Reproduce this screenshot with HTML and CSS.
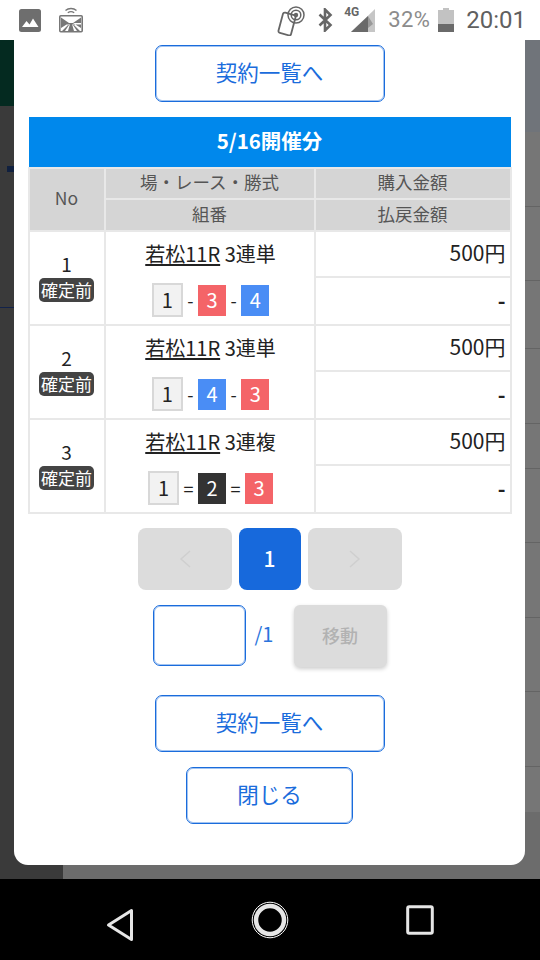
FILE: index.html
```html
<!DOCTYPE html>
<html lang="ja">
<head>
<meta charset="utf-8">
<title>契約一覧</title>
<link rel="stylesheet" href="styles.css">
</head>
<body>
<div class="phone">
  <header class="status">
    <svg class="st-pic" viewBox="0 0 22 23"><rect width="22" height="23" rx="2.5" fill="#6e6e6e"/><path d="M3 18l4.500-6 3 3.500 3.500-6 5.500 8.500z" fill="#fff"/></svg>
    <svg class="st-cast" viewBox="0 0 24 27"><g fill="none" stroke="#777" stroke-width="1.400"><path d="M6.500 4.500c3-2.600 8-2.600 11 0M8.800 6.800c2-1.500 4.400-1.500 6.400 0"/></g><rect x=".8" y="9.800" width="22.400" height="16" rx="1" fill="#fff" stroke="#777" stroke-width="1.600"/><path d="M2 11.500l8 5.500-8 5zM22 11.500l-8 5.500 8 5zM2 17h20v1.500H2z" fill="#777"/><path d="M9 25l2-7h2l2 7zM3 25l6-6h1l-4 6zM21 25l-6-6h-1l4 6z" fill="#777"/></svg>
    <span class="st-spacer"></span>
    <svg class="st-nfc" viewBox="0 0 30 30"><rect x="3.500" y="7.500" width="13" height="21" rx="2" transform="rotate(15 10 18)" fill="#fff" stroke="#666" stroke-width="1.800"/><g fill="none" stroke="#666"><circle cx="19" cy="9" r="8" stroke-width="1.500"/><circle cx="19" cy="9" r="4.800" stroke-width="1.500"/></g><circle cx="19" cy="9" r="2.200" fill="#666"/></svg>
    <svg class="st-bt" viewBox="0 0 15 24"><path d="M1.500 6.500l11 10.500-5.500 5.500V1.500l5.500 5.500-11 10.500" fill="none" stroke="#666" stroke-width="2.600"/></svg>
    <span class="st-signal">
      <b class="st-4g">4G</b>
      <svg viewBox="0 0 24 24"><path d="M24 1v23H0z" fill="#c6c6c6"/><path d="M17 8v16H0z" fill="#6a6a6a"/><path d="M17 8l5 8-5 4z" fill="#999"/></svg>
    </span>
    <span class="st-pct">32%</span>
    <svg class="st-batt" viewBox="0 0 16 24"><path d="M5 0h6v2h5v22H0V2h5z" fill="#c2c2c2"/><path d="M0 16h16v8H0z" fill="#6a6a6a"/></svg>
    <span class="st-time">20:01</span>
  </header>

  <main class="stage">
    <div class="bg-left">
      <div class="bg-green"></div>
      <div class="bg-dark-a"><i class="bg-mark"></i></div>
      <div class="bg-dark-b"></div>
      <div class="bg-dark-c"></div>
    </div>
    <div class="bg-right">
      <div class="bg-top"></div>
      <div class="bg-row"></div>
      <div class="bg-row"></div>
      <div class="bg-row bg-row-m"></div>
      <div class="bg-row"></div>
      <div class="bg-row bg-row-s"></div>
      <div class="bg-row"></div>
      <div class="bg-row"></div>
      <div class="bg-row"></div>
      <div class="bg-row"></div>
      <div class="bg-row bg-row-s bg-row-last"></div>
      <div class="bg-end"></div>
    </div>

    <section class="modal">
      <a class="btn btn-wide btn-first">契約一覧へ</a>
      <h2 class="bar">5/16開催分</h2>
      <table class="tbl">
        <colgroup><col class="c1"><col class="c2"><col class="c3"></colgroup>
        <thead>
          <tr class="hr1"><th rowspan="2">No</th><th>場・レース・勝式</th><th>購入金額</th></tr>
          <tr class="hr2"><th>組番</th><th>払戻金額</th></tr>
        </thead>
        <tbody>
          <tr class="r1">
            <td rowspan="2" class="no"><div>1</div><span class="badge">確定前</span></td>
            <td rowspan="2" class="race">
              <div class="race-name"><u>若松11R</u> 3連単</div>
              <div class="balls"><span class="ball ball-w">1</span><span class="sep">-</span><span class="ball ball-r">3</span><span class="sep">-</span><span class="ball ball-b">4</span></div>
            </td>
            <td class="amt">500円</td>
          </tr>
          <tr class="r2"><td class="amt amt-none">-</td></tr>
          <tr class="r1">
            <td rowspan="2" class="no"><div>2</div><span class="badge">確定前</span></td>
            <td rowspan="2" class="race">
              <div class="race-name"><u>若松11R</u> 3連単</div>
              <div class="balls"><span class="ball ball-w">1</span><span class="sep">-</span><span class="ball ball-b">4</span><span class="sep">-</span><span class="ball ball-r">3</span></div>
            </td>
            <td class="amt">500円</td>
          </tr>
          <tr class="r2"><td class="amt amt-none">-</td></tr>
          <tr class="r1">
            <td rowspan="2" class="no"><div>3</div><span class="badge">確定前</span></td>
            <td rowspan="2" class="race">
              <div class="race-name"><u>若松11R</u> 3連複</div>
              <div class="balls"><span class="ball ball-w">1</span><span class="sep">=</span><span class="ball ball-k">2</span><span class="sep">=</span><span class="ball ball-r">3</span></div>
            </td>
            <td class="amt">500円</td>
          </tr>
          <tr class="r2"><td class="amt amt-none">-</td></tr>
        </tbody>
      </table>

      <nav class="pager">
        <span class="pg pg-arrow"><svg viewBox="0 0 14 20"><path d="M12 2L3 10l9 8" fill="none" stroke="#cfcfcf" stroke-width="1.500"/></svg></span>
        <span class="pg pg-cur">1</span>
        <span class="pg pg-arrow"><svg viewBox="0 0 14 20"><path d="M2 2l9 8-9 8" fill="none" stroke="#cfcfcf" stroke-width="1.500"/></svg></span>
      </nav>

      <div class="jump">
        <input class="jump-input" type="text" aria-label="ページ">
        <span class="jump-total">/1</span>
        <span class="jump-btn">移動</span>
      </div>

      <a class="btn btn-wide btn-list">契約一覧へ</a>
      <a class="btn btn-close">閉じる</a>
    </section>
  </main>

  <footer class="nav">
    <svg class="nav-back" viewBox="0 0 28 34"><path d="M25.500 2.500v29L2.500 17z" fill="none" stroke="#e6e6e6" stroke-width="3" stroke-linejoin="round"/></svg>
    <svg class="nav-home" viewBox="0 0 38 38"><circle cx="19" cy="19" r="17.800" fill="none" stroke="#fff" stroke-width="1"/><circle cx="19" cy="19" r="14" fill="none" stroke="#e6e6e6" stroke-width="4.500"/></svg>
    <svg class="nav-recent" viewBox="0 0 28 30"><rect x="1.700" y="1.700" width="24.600" height="26.600" rx="1.500" fill="none" stroke="#e6e6e6" stroke-width="3"/></svg>
  </footer>
</div>
</body>
</html>
```

FILE: styles.css
```css
* { box-sizing: border-box; }
html, body { margin: 0; padding: 0; }
body { width: 540px; height: 960px; overflow: hidden; background: #000; font-family: "Noto Sans CJK JP", "Noto Sans", sans-serif; }
.phone { display: flex; flex-direction: column; width: 540px; height: 960px; }

/* status bar */
.status { display: flex; align-items: center; height: 40px; flex: none; background: #fff; font-family: Roboto, sans-serif; padding: 0 14px 0 19px; }
.st-pic { width: 22px; height: 23px; }
.st-cast { width: 24px; height: 27px; margin-left: 18px; margin-top: -1px; }
.st-spacer { flex: 1; }
.st-nfc { width: 30px; height: 30px; margin-top: 2px; }
.st-bt { width: 15px; height: 24px; margin-left: 11px; }
.st-signal { display: flex; position: relative; width: 31px; height: 24px; margin-left: 11px; justify-content: flex-end; }
.st-signal svg { width: 24px; height: 24px; }
.st-4g { position: absolute; left: 0; top: -2px; font-size: 12px; line-height: 13px; font-weight: 700; color: #666; }
.st-pct { font-size: 22px; line-height: 30px; color: #8c8c8c; margin-left: 13px; letter-spacing: .4px; }
.st-batt { width: 16px; height: 24px; margin-left: 8px; }
.st-time { font-size: 24px; line-height: 30px; color: #606060; margin-left: 12px; font-weight: 400; }

/* dimmed page behind */
.stage { position: relative; display: flex; flex: 1; background: #6c6c6c; overflow: hidden; }
.bg-left { display: flex; flex-direction: column; width: 63px; flex: none; background: #3a3a3a; }
.bg-green { height: 66px; background: #042a20; }
.bg-dark-a { height: 60px; }
.bg-mark { display: block; width: 7px; height: 6px; margin: 60px 0 0 7px; background: #10203f; }
.bg-dark-b { height: 142px; border-bottom: 1px solid #12224a; }
.bg-dark-c { flex: 1; }
.bg-right { display: flex; flex-direction: column; flex: 1; }
.bg-top { height: 92px; background: #70747a; }
.bg-row { height: 74.500px; background: #767676; border-bottom: 1px solid #646464; }
.bg-row-m { height: 68px; }
.bg-row-s { height: 45px; }
.bg-row-last { border-bottom: 0; }
.bg-end { flex: 1; background: #6c6c6c; }

/* modal */
.modal { position: absolute; left: 14px; top: 0; width: 511px; height: 825px; display: flex; flex-direction: column; align-items: center; background: #fff; border-radius: 0 0 14px 14px; }
.btn { display: flex; align-items: center; justify-content: center; height: 57px; padding-bottom: 4px; color: #1a6cdc; font-size: 21.500px; background: #fff; border: 1px solid #1a6cdc; box-shadow: inset 0 0 0 1px rgba(26,108,220,.4); border-radius: 7px; }
.btn-wide { width: 230px; }
.btn-first { margin-top: 5px; }
.btn-list { margin-top: 28px; }
.btn-close { width: 167px; margin-top: 15px; }
.bar { width: 482px; height: 50px; margin: 15px 0 0; background: #0088ec; color: #fff; font-size: 20.500px; font-weight: 700; line-height: 47px; text-align: center; }

/* table */
.tbl { width: 482px; table-layout: fixed; border-collapse: collapse; color: #222; margin-bottom: 14px; }
.c1 { width: 76px; }
.c2 { width: 210px; }
.c3 { width: 196px; }
.tbl th, .tbl td { border: 2px solid #e8e8e8; padding: 0; }
.tbl th { background: #d5d5d5; color: #555; font-size: 17.500px; font-weight: 400; text-align: center; line-height: 24px; padding-bottom: 3px; }
.hr1 { height: 31px; }
.hr2 { height: 32px; }
.r1 { height: 46px; }
.r2 { height: 48px; }
.no { text-align: center; font-size: 19px; line-height: 24px; vertical-align: top; padding-top: 20px !important; }
.no div { height: 26px; }
.badge { display: block; width: 55px; height: 24px; margin: 0 auto; background: #444; color: #fff; border-radius: 5px; font-size: 17px; line-height: 23px; }
.race { vertical-align: top; text-align: center; padding-left: 2px !important; }
.race-name { font-size: 20px; line-height: 26px; margin-top: 9px; }
.race-name u { text-underline-offset: 2px; }
.balls { display: flex; align-items: center; justify-content: center; margin-top: 16px; height: 34px; }
.ball { display: flex; align-items: center; justify-content: center; width: 28px; height: 31px; padding-bottom: 1px; font-size: 20px; }
.ball-w { width: 31px; height: 34px; background: #f2f2f2; color: #222; border: 2px solid #d8d8d8; }
.ball-r { background: #f46468; color: #fff; }
.ball-b { background: #4a8df5; color: #fff; }
.ball-k { background: #333; color: #fff; }
.sep { margin: 0 4.500px; font-size: 18px; line-height: 24px; color: #222; }
.amt { text-align: right; font-size: 21px; line-height: 28px; padding: 0 4px 4px 0 !important; }
.amt-none { font-weight: 700; padding-bottom: 2px !important; }

/* pager */
.pager { display: flex; gap: 7px; }
.pg { display: flex; align-items: center; justify-content: center; height: 62px; border-radius: 8px; }
.pg-arrow { width: 94px; background: #dcdcdc; }
.pg-arrow svg { width: 14px; height: 20px; }
.pg-cur { width: 62px; padding-bottom: 3px; background: #1769dc; color: #fff; font-size: 21px; font-weight: 500; }
.jump { display: flex; align-items: flex-start; width: 234px; margin-top: 15px; }
.jump-input { width: 93px; height: 61px; padding: 0; border: 1px solid #1a6cdc; box-shadow: inset 0 0 0 1px rgba(26,108,220,.4); border-radius: 7px; background: #fff; outline: 0; }
.jump-total { width: 48px; height: 62px; padding-left: 9px; color: #2a74dc; font-size: 20px; line-height: 57px; }
.jump-btn { display: flex; align-items: center; justify-content: center; width: 93px; height: 62px; padding-bottom: 3px; background: #dcdcdc; color: #b2b2b2; font-size: 18px; font-weight: 500; border-radius: 6px; box-shadow: 0 2px 4px rgba(0,0,0,.2); }

/* android nav */
.nav { position: relative; height: 81px; flex: none; background: #000; }
.nav svg { position: absolute; }
.nav-back { left: 106px; top: 29px; width: 28px; height: 34px; }
.nav-home { left: 251px; top: 22px; width: 38px; height: 38px; }
.nav-recent { left: 406px; top: 26px; width: 28px; height: 30px; }
```
